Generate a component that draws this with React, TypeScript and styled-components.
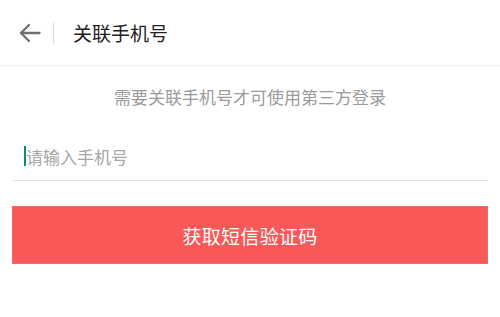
import React from 'react';
import styled, { createGlobalStyle } from 'styled-components';

const GlobalStyle = createGlobalStyle`
  html, body {
    margin: 0;
    padding: 0;
    background: #ffffff;
    font-family: 'Noto Sans CJK SC', 'Noto Sans', sans-serif;
  }
`;

const Page = styled.div`
  width: 500px;
  min-height: 317px;
  background: #ffffff;
  display: flex;
  flex-direction: column;
`;

const Header = styled.header`
  height: 65px;
  display: flex;
  align-items: center;
  border-bottom: 1px solid #efefef;
  box-sizing: content-box;
`;

const BackButton = styled.button`
  width: 40px;
  height: 40px;
  margin-left: 10px;
  padding: 0;
  border: none;
  background: none;
  display: flex;
  align-items: center;
  justify-content: center;
  color: #6f6f6f;
`;

const Divider = styled.span`
  width: 1px;
  height: 22px;
  margin-left: 3px;
  background: #dcdcdc;
`;

const Title = styled.h1`
  margin: 0 0 0 19px;
  font-size: 19px;
  font-weight: 400;
  line-height: 24px;
  color: #222222;
`;

const Hint = styled.p`
  margin: 20px 0 0;
  font-size: 17px;
  line-height: 22px;
  text-align: center;
  color: #9a9a9a;
`;

const Field = styled.label`
  margin: 26px 12px 0;
  height: 46px;
  padding-left: 12px;
  display: flex;
  align-items: center;
  border-bottom: 1px solid #e2e2e2;
`;

const Caret = styled.span`
  width: 2px;
  height: 20px;
  margin-top: -2px;
  background: #0e8a74;
  flex-shrink: 0;
`;

const PhoneInput = styled.input`
  flex: 1;
  border: none;
  outline: none;
  padding: 0 0 2px;
  margin: 0;
  background: transparent;
  font-family: inherit;
  font-size: 17px;
  color: #333333;

  &::placeholder {
    color: #a6a6a6;
  }
`;

const SubmitButton = styled.button`
  margin: 25px 12px 0;
  height: 58px;
  border: 1px solid #f06c6c;
  background: #f85858;
  color: #ffffff;
  font-family: inherit;
  font-size: 19px;
  letter-spacing: 0.3px;
  display: flex;
  align-items: center;
  justify-content: center;
`;

const ArrowLeft = () => (
  <svg width="24" height="24" viewBox="0 0 24 24" fill="none" stroke="currentColor" strokeWidth="2.3" strokeLinecap="round" strokeLinejoin="round">
    <path d="M21.5 12H3" />
    <path d="M11 4L3 12l8 8" />
  </svg>
);

const App: React.FC = () => {
  return (
    <Page>
      <GlobalStyle />
      <Header>
        <BackButton aria-label="返回">
          <ArrowLeft />
        </BackButton>
        <Divider />
        <Title>关联手机号</Title>
      </Header>
      <Hint>需要关联手机号才可使用第三方登录</Hint>
      <Field>
        <Caret />
        <PhoneInput type="tel" placeholder="请输入手机号" />
      </Field>
      <SubmitButton>获取短信验证码</SubmitButton>
    </Page>
  );
};

export default App;
